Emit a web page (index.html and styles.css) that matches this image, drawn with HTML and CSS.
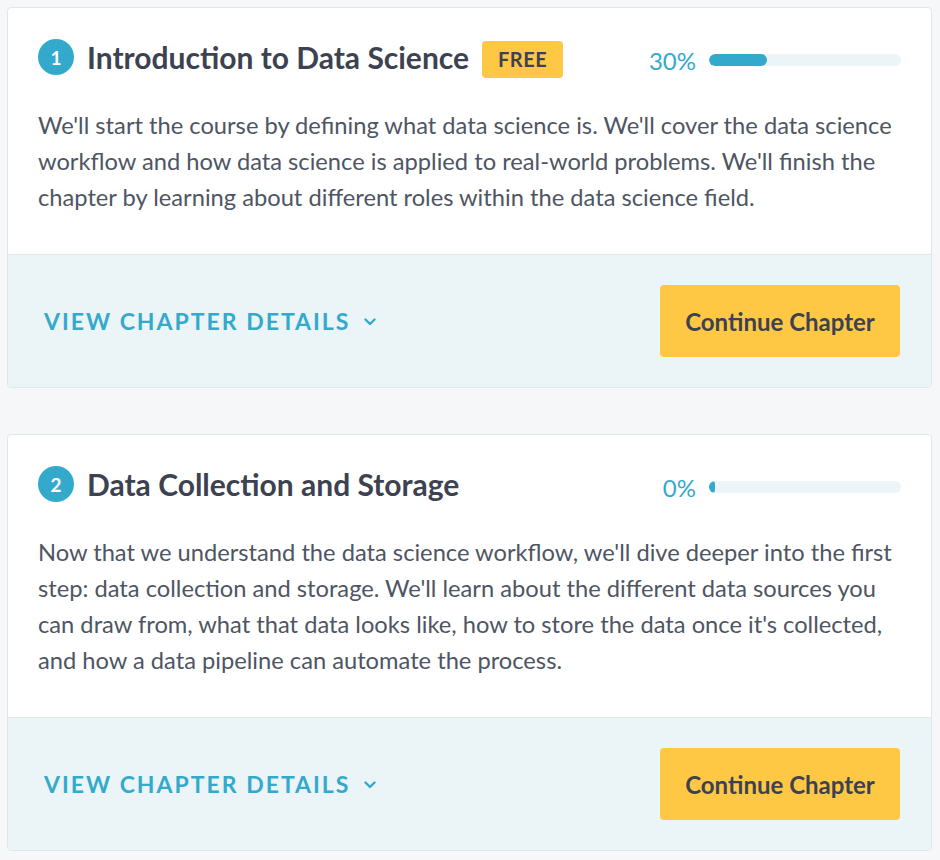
FILE: index.html
```html
<!DOCTYPE html>
<html lang="en">
<head>
<meta charset="utf-8">
<title>Chapters</title>
<link rel="stylesheet" href="styles.css">
</head>
<body>
<div class="chapters">
  <section class="card">
    <div class="card-body">
      <div class="card-head">
        <div class="title-wrap">
          <span class="num">1</span>
          <h3 class="title">Introduction to Data Science</h3>
          <span class="badge">FREE</span>
        </div>
        <div class="progress">
          <span class="pct">30%</span>
          <div class="track"><div class="fill" style="width:30%"></div></div>
        </div>
      </div>
      <p class="desc">We'll start the course by defining what data science is. We'll cover the data science workflow and how data science is applied to real-world problems. We'll finish the chapter by learning about different roles within the data science field.</p>
    </div>
    <div class="card-foot">
      <a class="details">VIEW CHAPTER DETAILS
        <svg class="chev" width="12" height="8" viewBox="0 0 12 8"><path d="M1.5 1.5 L6 6 L10.5 1.5" fill="none" stroke="#33aacc" stroke-width="2.4" stroke-linecap="round" stroke-linejoin="round"/></svg>
      </a>
      <button class="btn">Continue Chapter</button>
    </div>
  </section>

  <section class="card">
    <div class="card-body">
      <div class="card-head">
        <div class="title-wrap">
          <span class="num">2</span>
          <h3 class="title">Data Collection and Storage</h3>
        </div>
        <div class="progress">
          <span class="pct">0%</span>
          <div class="track"><div class="fill" style="width:0%"></div></div>
        </div>
      </div>
      <p class="desc">Now that we understand the data science workflow, we'll dive deeper into the first step: data collection and storage. We'll learn about the different data sources you can draw from, what that data looks like, how to store the data once it's collected, and how a data pipeline can automate the process.</p>
    </div>
    <div class="card-foot">
      <a class="details">VIEW CHAPTER DETAILS
        <svg class="chev" width="12" height="8" viewBox="0 0 12 8"><path d="M1.5 1.5 L6 6 L10.5 1.5" fill="none" stroke="#33aacc" stroke-width="2.4" stroke-linecap="round" stroke-linejoin="round"/></svg>
      </a>
      <button class="btn">Continue Chapter</button>
    </div>
  </section>
</div>
</body>
</html>
```

FILE: styles.css
```css
* { box-sizing: border-box; }
html, body { margin: 0; padding: 0; }
body {
  background: #f5f7f8;
  font-family: Lato, "Open Sans", Arial, sans-serif;
  color: #3d4251;
}
.chapters {
  padding: 7px 8px 0 7px;
  display: flex;
  flex-direction: column;
  gap: 46px;
}
.card {
  background: #fff;
  border: 1px solid #e1e6e8;
  border-radius: 4px;
  overflow: hidden;
}
.card-body {
  padding: 29px 30px 39px 30px;
}
.card-head {
  display: flex;
  align-items: center;
  justify-content: space-between;
  height: 40px;
  margin-bottom: 30px;
}
.title-wrap {
  display: flex;
  align-items: center;
}
.num {
  width: 36px;
  height: 36px;
  border-radius: 50%;
  background: #33aacc;
  color: #fff;
  font-weight: 700;
  font-size: 19px;
  display: flex;
  align-items: center;
  justify-content: center;
  margin-right: 13px;
}
.title {
  margin: 0;
  font-size: 30px;
  font-weight: 700;
  color: #3d4251;
  line-height: 40px;
}
.badge {
  margin-left: 13px;
  background: #ffc844;
  color: #3d4251;
  font-weight: 700;
  font-size: 20px;
  letter-spacing: 0.5px;
  border-radius: 4px;
  height: 37px;
  padding: 0 16px;
  display: flex;
  align-items: center;
  margin-top: 4px;
}
.progress {
  display: flex;
  align-items: center;
  gap: 13px;
  margin-top: 6px;
}
.pct {
  color: #33aacc;
  font-size: 24px;
}
.track {
  width: 192px;
  height: 12px;
  border-radius: 6px;
  background: #ebf4f7;
  overflow: hidden;
}
.fill {
  height: 100%;
  min-width: 6px;
  background: #33aacc;
  border-radius: 6px;
}
.desc {
  margin: 0;
  font-size: 23.7px;
  line-height: 36px;
  color: #4e5563;
}
.card-foot {
  background: #ebf4f7;
  border-top: 1px solid #e1e6e8;
  padding: 30px 31px 30px 36px;
  display: flex;
  align-items: center;
  justify-content: space-between;
}
.details {
  color: #33aacc;
  font-weight: 700;
  font-size: 23px;
  letter-spacing: 2px;
  display: flex;
  align-items: center;
  gap: 14px;
}
.chev { margin-top: 1px; }
.btn {
  width: 240px;
  height: 72px;
  border: none;
  border-radius: 4px;
  background: #ffc844;
  color: #3d4251;
  font-family: Lato, "Open Sans", Arial, sans-serif;
  font-weight: 700;
  font-size: 24px;
}
```
